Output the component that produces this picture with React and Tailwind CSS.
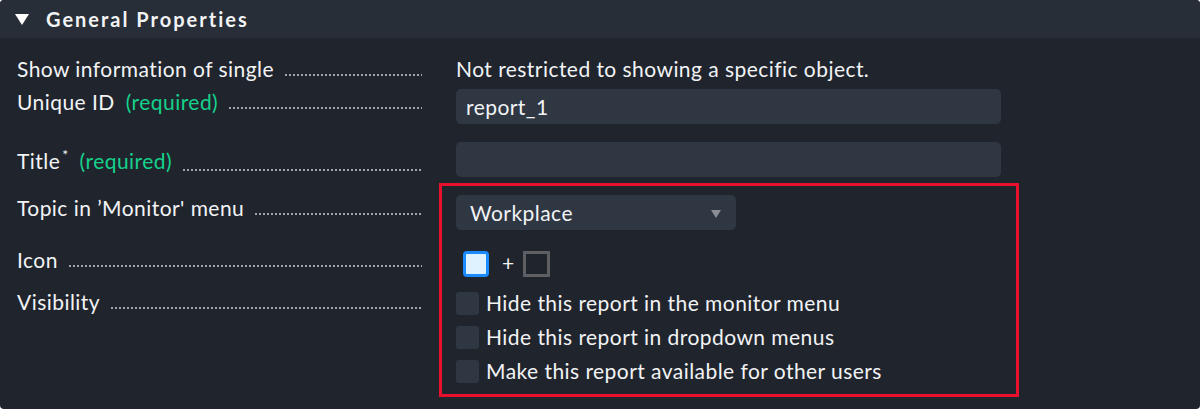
import React from "react";

const font = { fontFamily: "Lato, 'Open Sans', sans-serif" };

const Dots = () => (
  <span className="flex-1 h-[2px] mb-[5px] ml-[10px] bg-[radial-gradient(circle,#a0a5ad_0.75px,transparent_1.15px)] bg-[length:4px_2px] bg-repeat-x" />
);

const Label = ({ children, className = "" }) => (
  <div className={`w-[422px] pl-[17px] flex items-end leading-6 ${className}`}>
    <span className="whitespace-nowrap">{children}</span>
    <Dots />
  </div>
);

const Req = () => <span className="text-[#15d18c] ml-[11px]">(required)</span>;

const Check = ({ text }) => (
  <div className="flex items-center h-[34px]">
    <span className="w-[23px] h-[23px] rounded-[3px] bg-[#2f3743]" />
    <span className="ml-[7px] leading-6">{text}</span>
  </div>
);

export default function App() {
  return (
    <div style={font} className="w-[1200px] h-[409px] bg-[#20252d] text-[#f2f3f5] text-[21px] tracking-[0.45px] rounded-[4px] overflow-hidden relative">
      <div className="h-[38px] bg-[#282e37] flex items-center">
        <span className="ml-[15px] mt-[1px] w-0 h-0 border-l-[7px] border-r-[7px] border-t-[11px] border-l-transparent border-r-transparent border-t-white" />
        <span className="ml-[17px] font-bold text-[20px] tracking-[2px]">General Properties</span>
      </div>

      <div className="flex flex-col pt-[19px]">
        <div className="flex h-[24px]">
          <Label>Show information of single</Label>
          <div className="ml-[34px] leading-6">Not restricted to showing a specific object.</div>
        </div>

        <div className="flex mt-[8px]">
          <Label className="h-[24px] mt-[1px]">
            Unique ID<Req />
          </Label>
          <div className="ml-[34px] w-[545px] h-[35px] rounded-[5px] bg-[#2f3743] pl-[10px] flex items-center">report_1</div>
        </div>

        <div className="flex mt-[18px]">
          <Label className="h-[24px] mt-[10px]">
            Title<span className="text-[14px] ml-[2px] relative -top-[9px]">*</span><Req />
          </Label>
          <div className="ml-[34px] w-[545px] h-[35px] rounded-[5px] bg-[#2f3743]" />
        </div>

        <div className="flex mt-[18px]">
          <Label className="h-[24px] mt-[1px]">Topic in ’Monitor' menu</Label>
          <div className="ml-[34px] w-[280px] h-[35px] rounded-[5px] bg-[#2f3743] pl-[14px] pr-[15px] flex items-center justify-between">
            <span>Workplace</span>
            <span className="w-0 h-0 border-l-[5px] border-r-[5px] border-t-[8px] border-l-transparent border-r-transparent border-t-[#8b8f95] mt-[2px]" />
          </div>
        </div>

        <div className="flex mt-[18px]">
          <Label className="h-[24px]">Icon</Label>
          <div className="flex items-center h-[29px] mt-[1px] ml-[41px]">
            <span className="w-[26px] h-[26px] rounded-[4px] border-[3px] border-[#1a8cff] bg-[#def3ff]" />
            <span className="ml-[13px] text-[21px] leading-none -mt-[2px]">+</span>
            <span className="ml-[8px] w-[27px] h-[26px] border-[3px] border-[#5d5f62]" />
          </div>
        </div>

        <div className="flex mt-[11px]">
          <Label className="h-[24px] mt-[1px]">Visibility</Label>
          <div className="ml-[34px] flex flex-col -mt-[3px]">
            <Check text="Hide this report in the monitor menu" />
            <Check text="Hide this report in dropdown menus" />
            <Check text="Make this report available for other users" />
          </div>
        </div>
      </div>

      <div className="absolute left-[439px] top-[183px] w-[580px] h-[214px] border-[3px] border-[#e8102c] pointer-events-none" />
    </div>
  );
}
